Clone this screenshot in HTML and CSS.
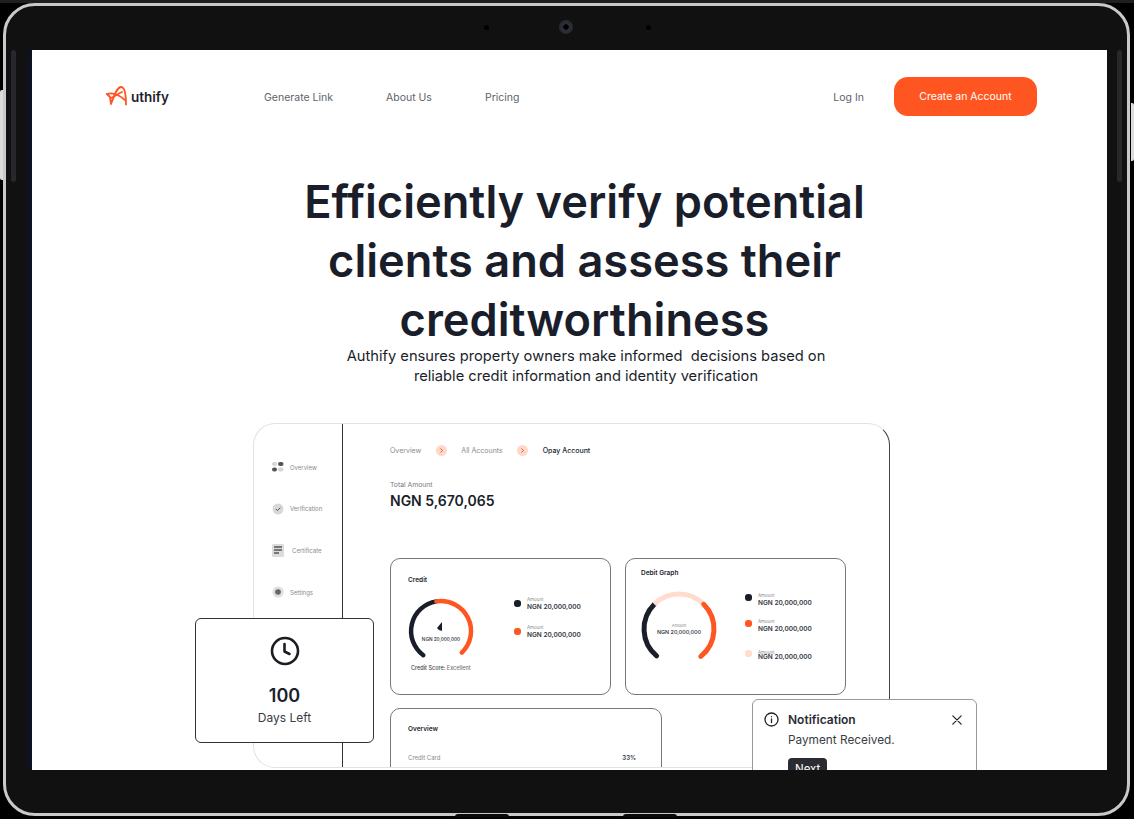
FILE: index.html
```html
<!DOCTYPE html>
<html lang="en">

<head>
    <meta charset="UTF-8">
    <meta name="viewport" content="width=device-width, initial-scale=1.0">
    <title>Authify</title>
    <link rel="stylesheet" href="styles.css">
</head>

<body>
    <div class="device">
        <span class="cam dot1"></span>
        <span class="cam lens"></span>
        <span class="cam dot2"></span>
        <span class="sideBtn left"></span>
        <span class="sideBtn right"></span>
        <span class="edge edgeLeft"></span>
        <span class="edge edgeRight"></span>
        <span class="bump bumpLeft"></span>
        <span class="bump bumpRight"></span>

        <div class="screen">
            <div class="nav">
                <div class="logo">
                    <svg width="22" height="21" viewBox="0 0 22 21" fill="none" stroke="#ff5520" stroke-width="1.800" stroke-linecap="round" stroke-linejoin="round">
                        <path d="M1 8l3 3 1 7C8 10 11 1 15 1c4 0 5 9 5 17.500"/>
                        <path d="M1 8c6-2 12 1 18 6"/>
                        <path d="M5 12c3-1 8-5 11-6"/>
                    </svg>
                    <span>uthify</span>
                </div>
                <div class="links">
                    <a>Generate Link</a>
                    <a>About Us</a>
                    <a>Pricing</a>
                </div>
                <a class="login">Log In</a>
                <a class="createBtn">Create an Account</a>
            </div>

            <div class="hero">
                <h1>Efficiently verify potential<br>clients and assess their<br>creditworthiness</h1>
                <p>Authify ensures property owners make informed&nbsp; decisions based on<br>reliable credit information and identity verification</p>
            </div>

            <div class="dash">
                <div class="sidebar">
                    <div class="sideItem">
                        <svg width="12" height="10" viewBox="0 0 12 10"><rect x="0" y="0" width="5" height="4" rx="2" fill="#d5d5d5"/><rect x="6" y="0" width="5.500" height="4" rx="2" fill="#555"/><rect x="0" y="5.500" width="5" height="4" rx="2" fill="#555"/><rect x="6" y="5.500" width="5.500" height="4" rx="2" fill="#d5d5d5"/></svg>
                        <span>Overview</span>
                    </div>
                    <div class="sideItem">
                        <svg width="12" height="12" viewBox="0 0 12 12"><circle cx="6" cy="6" r="5.500" fill="#d8d8d8"/><path d="M3.800 6l1.600 1.600 3-3" fill="none" stroke="#555" stroke-width="1"/></svg>
                        <span>Verification</span>
                    </div>
                    <div class="sideItem">
                        <svg width="12" height="13" viewBox="0 0 12 13"><rect width="12" height="13" rx="1.500" fill="#dcdcdc"/><path d="M2 3h8M2 6h8M2 9h5" stroke="#555" stroke-width="1.300"/></svg>
                        <span class="wide">Certificate</span>
                    </div>
                    <div class="sideItem">
                        <svg width="12" height="12" viewBox="0 0 12 12"><circle cx="6" cy="6" r="5.500" fill="#dedede"/><circle cx="6" cy="6" r="2.800" fill="#666"/></svg>
                        <span>Settings</span>
                    </div>
                </div>

                <div class="dashMain">
                    <div class="crumbs">
                        <span>Overview</span>
                        <i class="chev"><svg width="5" height="5" viewBox="0 0 5 5"><path d="M1.500 .5l2 2-2 2" fill="none" stroke="#ff5520" stroke-width="1"/></svg></i>
                        <span>All Accounts</span>
                        <i class="chev"><svg width="5" height="5" viewBox="0 0 5 5"><path d="M1.500 .5l2 2-2 2" fill="none" stroke="#ff5520" stroke-width="1"/></svg></i>
                        <span class="current">Opay Account</span>
                    </div>
                    <div class="totalLabel">Total Amount</div>
                    <div class="totalValue">NGN 5,670,065</div>

                    <div class="cardRow">
                        <div class="card creditCard">
                            <div class="cardTitle">Credit</div>
                            <div class="cardBody">
                                <div class="gaugeCol">
                                    <svg class="gauge" width="70" height="70" viewBox="0 0 70 70" fill="none" stroke-width="4.500" stroke-linecap="round">
                                        <path d="M17.300 59.200 A30 30 0 0 1 30.400 5.400" stroke="#1a1e2b"/>
                                        <path d="M30.400 5.400 A30 30 0 0 1 55.800 56.700" stroke="#ff5520"/>
                                        <path d="M36 26l-5 6 2 2 3 1z" fill="#1a1e2b" stroke="none"/>
                                        <text x="35" y="45" class="gaugeText">NGN 20,000,000</text>
                                    </svg>
                                    <div class="score">Credit Score: <span>Excellent</span></div>
                                </div>
                                <div class="legend gapA">
                                    <div class="legendItem"><i class="swatch dark"></i><div><small>Amount</small><b>NGN 20,000,000</b></div></div>
                                    <div class="legendItem"><i class="swatch orange"></i><div><small>Amount</small><b>NGN 20,000,000</b></div></div>
                                </div>
                            </div>
                        </div>

                        <div class="card debitCard">
                            <div class="cardTitle">Debit Graph</div>
                            <div class="cardBody">
                                <svg class="gauge" width="80" height="80" viewBox="0 0 80 80" fill="none" stroke-width="5" stroke-linecap="round">
                                    <path d="M17.600 66.900 A35 35 0 0 1 15.300 15.300" stroke="#1a1e2b"/>
                                    <path d="M15.300 15.300 A35 35 0 0 1 64.700 15.300" stroke="#ffdccf" stroke-linecap="butt"/>
                                    <path d="M64.700 15.300 A35 35 0 0 1 61.800 67.400" stroke="#ff5520"/>
                                    <text x="40" y="37.500" class="gaugeSmall">Amount</text>
                                    <text x="40" y="45" class="gaugeLarge">NGN 20,000,000</text>
                                </svg>
                                <div class="legend gapB">
                                    <div class="legendItem"><i class="swatch dark"></i><div><small>Amount</small><b>NGN 20,000,000</b></div></div>
                                    <div class="legendItem"><i class="swatch orange"></i><div><small>Amount</small><b>NGN 20,000,000</b></div></div>
                                    <div class="legendItem squeeze"><i class="swatch pale"></i><div><small>Amount</small><b>NGN 20,000,000</b></div></div>
                                </div>
                            </div>
                        </div>
                    </div>

                    <div class="card overviewCard">
                        <div class="cardTitle">Overview</div>
                        <div class="overviewRow"><span>Credit Card</span><b>33%</b></div>
                    </div>
                </div>
            </div>

            <div class="daysCard">
                <svg width="30" height="30" viewBox="0 0 30 30" fill="none" stroke="#1c1c22" stroke-width="2.600" stroke-linecap="round" stroke-linejoin="round">
                    <circle cx="15" cy="15" r="13"/>
                    <path d="M14.500 8v7.500l5 2.500"/>
                </svg>
                <div class="daysNum">100</div>
                <div class="daysText">Days Left</div>
            </div>

            <div class="notice">
                <svg class="infoIcon" width="15" height="15" viewBox="0 0 15 15" fill="none" stroke="#222" stroke-width="1.300" stroke-linecap="round">
                    <circle cx="7.500" cy="7.500" r="6.500"/>
                    <path d="M7.500 7v3.500M7.500 4.600v.1"/>
                </svg>
                <div class="noticeBody">
                    <div class="noticeTitle">Notification</div>
                    <div class="noticeText">Payment Received.</div>
                    <span class="nextBtn">Next</span>
                </div>
                <svg class="closeIcon" width="10" height="10" viewBox="0 0 10 10" fill="none" stroke="#222" stroke-width="1.200" stroke-linecap="round">
                    <path d="M.8 .8l8.400 8.400M9.200 .8L.8 9.200"/>
                </svg>
            </div>
        </div>
    </div>
</body>

</html>
```

FILE: styles.css
```css
html,
body {
    margin: 0;
    height: 100%;
}

body {
    background-color: #000;
    border-top: 3px solid #1f1f1f;
    box-sizing: border-box;
    overflow: hidden;
    font-family: Inter, "Liberation Sans", sans-serif;
    color: #1a1e2b;
}

/* tablet frame */
.device {
    position: relative;
    box-sizing: border-box;
    width: 1127px;
    height: 813px;
    margin-left: 3px;
    padding: 44px 20px 43px 21px;
    border: 3px solid #c9c9c9;
    border-radius: 32px;
    background-color: #111;
}

.cam {
    position: absolute;
    border-radius: 50%;
    background-color: #000;
}

.dot1 {
    left: 478px;
    top: 19px;
    width: 5px;
    height: 5px;
}

.dot2 {
    left: 640px;
    top: 19px;
    width: 5px;
    height: 5px;
}

.lens {
    left: 553px;
    top: 14px;
    width: 14px;
    height: 14px;
    background: radial-gradient(circle, #000 25%, #2c3036 30%, #23262b 100%);
}

.sideBtn {
    position: absolute;
    top: 44px;
    width: 5px;
    height: 132px;
    border-radius: 4px;
    background-color: #26282c;
}

.sideBtn.left {
    left: 5px;
}

.sideBtn.right {
    right: 5px;
}

.edge {
    position: absolute;
    width: 3px;
    background-color: #dcdcdc;
}

.edgeLeft {
    left: -6px;
    top: 84px;
    height: 90px;
    border-radius: 2px 0 0 2px;
}

.edgeRight {
    right: -7px;
    top: 97px;
    height: 58px;
    border-radius: 0 2px 2px 0;
}

.bump {
    position: absolute;
    bottom: -4px;
    width: 54px;
    height: 3px;
    border-radius: 3px 3px 0 0;
    background-color: #0a0a0a;
}

.bumpLeft {
    left: 449px;
}

.bumpRight {
    left: 617px;
}

.screen {
    position: relative;
    height: 720px;
    overflow: hidden;
    border-left: 5px solid #0c1220;
    background-color: #fff;
}

/* nav */
.nav {
    display: flex;
    align-items: center;
    height: 39px;
    padding: 27px 70px 0 74px;
    font-size: 10.500px;
    color: #60636c;
}

.logo {
    display: flex;
    align-items: center;
    gap: 3px;
    width: 158px;
    font-size: 13.500px;
    font-weight: 600;
    color: #1a1e2b;
}

.links {
    display: flex;
    flex: 1;
    gap: 53px;
    margin-top: 1px;
}

.login {
    margin: 1px 30px 0 0;
}

.createBtn {
    width: 143px;
    height: 39px;
    border-radius: 14px;
    background-color: #ff5520;
    color: #fff;
    line-height: 40px;
    text-align: center;
}

/* hero */
.hero {
    padding-left: 30px;
    text-align: center;
}

h1 {
    margin: 56px 0 0;
    font-size: 45.200px;
    font-weight: 600;
    line-height: 59px;
}

.hero p {
    margin: -2px 0 0 3px;
    font-size: 14.700px;
    line-height: 19.500px;
}

/* dashboard */
.dash {
    display: flex;
    box-sizing: border-box;
    width: 637px;
    height: 345px;
    margin: 37px 0 0 221px;
    border: 1px solid #e2e2e2;
    border-right-color: #444;
    border-radius: 22px;
    overflow: hidden;
}

.sidebar {
    box-sizing: border-box;
    width: 89px;
    padding: 36px 0 0 18px;
    border-right: 1.500px solid #333;
}

.sideItem {
    display: flex;
    align-items: center;
    gap: 6px;
    height: 14px;
    margin-bottom: 27.700px;
    font-size: 6px;
    color: #8a8a8a;
}

.sideItem .wide {
    margin-left: 2px;
}

.dashMain {
    flex: 1;
    padding: 21px 0 0 47px;
}

.crumbs {
    display: flex;
    align-items: center;
    gap: 14.500px;
    height: 11px;
    font-size: 7px;
    color: #8a8a8a;
}

.crumbs .current {
    color: #1a1e2b;
    font-weight: 500;
}

.chev {
    display: flex;
    align-items: center;
    justify-content: center;
    width: 11px;
    height: 11px;
    border-radius: 50%;
    background-color: #ffd8ca;
}

.totalLabel {
    margin-top: 24px;
    font-size: 6.800px;
    color: #77797f;
}

.totalValue {
    margin-top: 3px;
    font-size: 14px;
    font-weight: 600;
}

.cardRow {
    display: flex;
    gap: 14px;
    margin-top: 49px;
}

.card {
    box-sizing: border-box;
    width: 221px;
    height: 137px;
    border: 1px solid #777;
    border-radius: 10px;
    background-color: #fff;
}

.cardTitle {
    font-size: 6.500px;
    font-weight: 600;
}

.creditCard {
    padding: 16.500px 0 0 17px;
}

.debitCard {
    padding: 10px 0 0 15px;
}

.cardBody {
    display: flex;
}

.creditCard .cardBody {
    margin-top: 12px;
}

.debitCard .cardBody {
    margin-top: 11.500px;
}

.gaugeCol {
    margin-left: -2.500px;
}

.debitCard .gauge {
    margin-left: -2px;
}

.gauge {
    display: block;
    flex: none;
}

.gaugeText {
    font-size: 4.700px;
    font-weight: 500;
    fill: #1a1e2b;
    stroke: none;
    text-anchor: middle;
}

.gaugeLarge {
    font-size: 5.400px;
    font-weight: 500;
    fill: #1a1e2b;
    stroke: none;
    text-anchor: middle;
}

.gaugeSmall {
    font-size: 4px;
    fill: #8a8a8a;
    stroke: none;
    text-anchor: middle;
}

.score {
    margin: -1px 0 0 5.500px;
    font-size: 5.500px;
    font-weight: 500;
    color: #444;
}

.score span {
    color: #777;
}

.legend {
    display: flex;
    flex-direction: column;
}

.gapA {
    gap: 14px;
    margin: 1px 0 0 38.500px;
}

.gapB {
    gap: 12px;
    margin: 4.500px 0 0 26px;
}

.legendItem {
    display: flex;
    align-items: center;
    gap: 6px;
}

.swatch {
    width: 7px;
    height: 7px;
    border-radius: 3px;
}

.gapB .swatch {
    margin-bottom: 6px;
}

.dark {
    background-color: #1a1e2b;
}

.orange {
    background-color: #ff5520;
}

.pale {
    background-color: #ffdccf;
}

.legendItem small {
    display: block;
    font-size: 4.500px;
    line-height: 6px;
    color: #8a8a8a;
}

.legendItem b {
    display: block;
    font-size: 6.500px;
    font-weight: 600;
    line-height: 8px;
    color: #33363f;
}

/* third row in the debit legend sits tighter in the source */
.squeeze small {
    margin: 2.500px 0 -2.500px;
}

.squeeze .swatch {
    margin-top: 5px;
}

.overviewCard {
    width: 272px;
    margin-top: 13px;
    padding: 16px 25px 0 17px;
}

.overviewRow {
    display: flex;
    justify-content: space-between;
    margin-top: 21px;
    font-size: 6px;
    color: #8a8a8a;
}

.overviewRow b {
    font-weight: 600;
    color: #33363f;
}

/* floating cards */
.daysCard {
    position: absolute;
    left: 163px;
    top: 568px;
    display: flex;
    flex-direction: column;
    align-items: center;
    box-sizing: border-box;
    width: 179px;
    height: 125px;
    padding-top: 17px;
    border: 1px solid #333;
    border-radius: 6px;
    background-color: #fff;
}

.daysNum {
    margin-top: 19px;
    font-size: 18px;
    font-weight: 600;
    line-height: 22px;
}

.daysText {
    margin-top: 2px;
    font-size: 12px;
    line-height: 18px;
    color: #3a3d44;
}

.notice {
    position: absolute;
    left: 720px;
    top: 649px;
    display: flex;
    box-sizing: border-box;
    width: 225px;
    height: 110px;
    padding: 12px 14px 0 11px;
    border: 1px solid #999;
    border-radius: 6px;
    background-color: #fff;
}

.infoIcon {
    flex: none;
    margin-right: 9px;
}

.noticeBody {
    flex: 1;
}

.noticeTitle {
    font-size: 12px;
    font-weight: 600;
    line-height: 15px;
    color: #2a2c33;
}

.noticeText {
    margin-top: 5.500px;
    font-size: 11.800px;
    line-height: 15px;
    color: #3a3d44;
}

.nextBtn {
    display: inline-block;
    margin-top: 10.500px;
    padding: 4px 7px;
    border-radius: 4px;
    background-color: #2b2c32;
    font-size: 11.500px;
    color: #fff;
}

.closeIcon {
    flex: none;
    margin-top: 3px;
}
```
